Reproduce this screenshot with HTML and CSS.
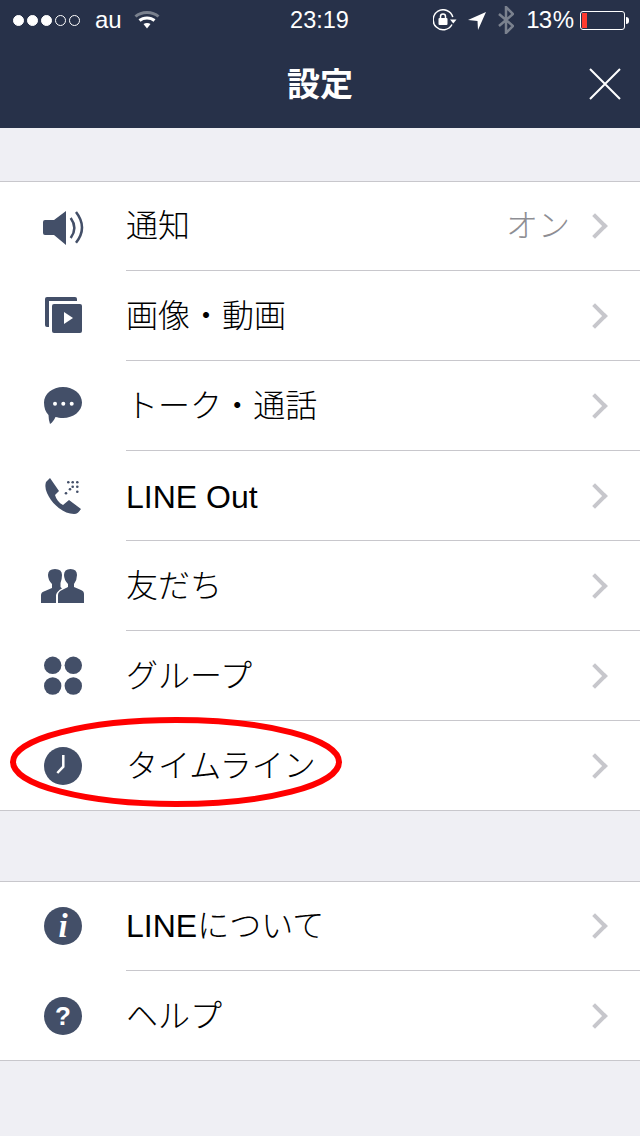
FILE: index.html
```html
<!DOCTYPE html>
<html lang="ja">
<head>
    <meta charset="UTF-8">
    <meta name="viewport" content="width=device-width, initial-scale=1.0">
    <title>設定</title>
    <link rel="stylesheet" href="styles.css">
</head>
<body>
    <div id="header">
        <div id="status-bar">
            <div class="status-left">
                <div class="signal">
                    <span class="dot on"></span><span class="dot on"></span><span class="dot on"></span><span class="dot"></span><span class="dot"></span>
                </div>
                <span class="carrier">au</span>
                <svg class="wifi" width="26" height="20" viewBox="0 0 26 20">
                    <path d="M1.500 6.500C7.500 1 18.500 1 24.500 6.500" fill="none" stroke="#7a818e" stroke-width="3"/>
                    <path d="M5.500 10.500C9.500 7 16.500 7 20.500 10.500" fill="none" stroke="#fff" stroke-width="3"/>
                    <path d="M9.500 14C11.500 12.500 14.500 12.500 16.500 14L13 18.500Z" fill="#fff"/>
                </svg>
            </div>
            <div class="status-time">23:19</div>
            <div class="status-right">
                <svg width="24" height="22" viewBox="0 0 24 22">
                    <path d="M19 15.500A10 10 0 1 1 19.800 8" fill="none" stroke="#fff" stroke-width="1.500"/>
                    <path d="M17 10.500h6.500l-3.250 4z" fill="#fff"/>
                    <rect x="5.500" y="9" width="9" height="7" rx="1" fill="#fff"/>
                    <path d="M7.500 9V7.500a2.500 2.500 0 0 1 5 0V9" fill="none" stroke="#fff" stroke-width="1.500"/>
                </svg>
                <svg class="arrow" width="20" height="20" viewBox="0 0 20 20">
                    <path d="M0 10L18 2L10 20L9.500 11Z" fill="#fff"/>
                </svg>
                <svg class="bt" width="16" height="28" viewBox="0 0 16 28">
                    <path d="M1 8L15 20L8 27V1L15 8L1 20" fill="none" stroke="#7a818e" stroke-width="2.500"/>
                </svg>
                <span class="battery-text">13 %</span>
                <div class="battery"><div class="battery-level"></div></div>
                <div class="battery-tip"></div>
            </div>
        </div>
        <div id="nav-bar">
            <div id="nav-title">設定</div>
            <svg id="nav-close" width="32" height="32" viewBox="0 0 32 32">
                <path d="M1 1L31 31M31 1L1 31" stroke="#fff" stroke-width="2" fill="none"/>
            </svg>
        </div>
    </div>

    <div class="group first-group">
        <div class="row">
            <div class="row-icon">
                <svg width="44" height="44" viewBox="0 0 44 44">
                    <path d="M4 16H13L25 7V41L13 31H4Q2 31 2 29V18Q2 16 4 16Z" fill="#434f68"/>
                    <path d="M29.700 14Q37 24 29.700 34" fill="none" stroke="#434f68" stroke-width="2.500"/>
                    <path d="M35 8Q47 23.500 35 38.700" fill="none" stroke="#434f68" stroke-width="2.500"/>
                </svg>
            </div>
            <div class="row-body">
                <span class="row-label">通知</span>
                <span class="row-value">オン</span>
                <span class="chevron"></span>
            </div>
        </div>
        <div class="row">
            <div class="row-icon">
                <svg width="44" height="44" viewBox="0 0 44 44">
                    <rect x="4" y="3" width="32" height="30" rx="2" fill="#434f68"/>
                    <rect x="8" y="7" width="33" height="32" fill="#fff"/>
                    <rect x="11" y="10" width="30" height="29" rx="2" fill="#434f68"/>
                    <path d="M23 18L32 24L23 30Z" fill="#fff"/>
                </svg>
            </div>
            <div class="row-body">
                <span class="row-label">画像・動画</span>
                <span class="chevron"></span>
            </div>
        </div>
        <div class="row">
            <div class="row-icon">
                <svg width="44" height="44" viewBox="0 0 44 44">
                    <path d="M22 3C32.500 3 41 10 41 18.500C41 27.500 32 34 22 34C19 34 16.500 33.500 14.500 33C13 36 11.500 38.500 9 40C8 37 7.500 34 7.500 31C4.500 28 3 24 3 18.500C3 10 11.500 3 22 3Z" fill="#434f68"/>
                    <circle cx="14" cy="19.700" r="2" fill="#fff"/>
                    <circle cx="22.300" cy="19.700" r="2" fill="#fff"/>
                    <circle cx="30.700" cy="19.700" r="2" fill="#fff"/>
                </svg>
            </div>
            <div class="row-body">
                <span class="row-label">トーク・通話</span>
                <span class="chevron"></span>
            </div>
        </div>
        <div class="row">
            <div class="row-icon">
                <svg width="44" height="44" viewBox="0 0 44 44">
                    <path d="M9 4L18 17L14 21C15 25 18 29 22 31L28 26L40 35C38 38 36 40 33 40C25 40 16 34 10 26C6 20 3 14 5 8Z" fill="#434f68"/>
                    <g fill="#434f68">
                        <circle cx="27.300" cy="8.300" r="1.300"/><circle cx="31.700" cy="8.300" r="1.300"/><circle cx="36.300" cy="8.300" r="1.300"/>
                        <circle cx="31.700" cy="12.700" r="1.300"/><circle cx="36.300" cy="12.700" r="1.300"/>
                        <circle cx="29" cy="15.300" r="1.300"/><circle cx="36.300" cy="17.700" r="1.300"/>
                        <circle cx="25" cy="19.300" r="1.300"/>
                    </g>
                </svg>
            </div>
            <div class="row-body">
                <span class="row-label line-out"><span class="latin">LINE Out</span></span>
                <span class="chevron"></span>
            </div>
        </div>
        <div class="row">
            <div class="row-icon">
                <svg width="44" height="44" viewBox="0 0 44 44">
                    <path d="M0 39V31Q0 28 4 27L11 24V20Q7 16 7 11Q7 5 14 5Q21 5 21 11Q21 15 19.500 19V23L21 24.500Q16 27 15 31V39Z" fill="#434f68"/>
                    <path d="M17 39V31Q17 28 21 26L27 23V20Q23 16 23 11Q23 5 29.500 5Q36 5 36 11Q36 16 33 20V23L40 26Q43 27 43 30V39Z" fill="#434f68"/>
                </svg>
            </div>
            <div class="row-body">
                <span class="row-label">友だち</span>
                <span class="chevron"></span>
            </div>
        </div>
        <div class="row">
            <div class="row-icon">
                <svg width="44" height="44" viewBox="0 0 44 44">
                    <circle cx="11.700" cy="11.300" r="8.700" fill="#434f68"/>
                    <circle cx="32.300" cy="11.300" r="8.700" fill="#434f68"/>
                    <circle cx="11.700" cy="32" r="8.700" fill="#434f68"/>
                    <circle cx="32.300" cy="32" r="8.700" fill="#434f68"/>
                </svg>
            </div>
            <div class="row-body">
                <span class="row-label">グループ</span>
                <span class="chevron"></span>
            </div>
        </div>
        <div class="row">
            <div class="row-icon">
                <svg width="44" height="44" viewBox="0 0 44 44">
                    <circle cx="22" cy="22" r="19" fill="#434f68"/>
                    <path d="M22.300 11V22.700L16.300 29" fill="none" stroke="#fff" stroke-width="2.500"/>
                </svg>
            </div>
            <div class="row-body">
                <span class="row-label">タイムライン</span>
                <span class="chevron"></span>
            </div>
            <svg class="annotation" width="340" height="94" viewBox="0 0 340 94">
                <ellipse cx="170" cy="48" rx="163" ry="42" fill="none" stroke="#f00" stroke-width="6"/>
            </svg>
        </div>
    </div>

    <div class="group second-group">
        <div class="row">
            <div class="row-icon">
                <div class="badge badge-info">i</div>
            </div>
            <div class="row-body">
                <span class="row-label"><span class="latin">LINE</span>について</span>
                <span class="chevron"></span>
            </div>
        </div>
        <div class="row">
            <div class="row-icon">
                <div class="badge">?</div>
            </div>
            <div class="row-body">
                <span class="row-label">ヘルプ</span>
                <span class="chevron"></span>
            </div>
        </div>
    </div>
</body>
</html>
```

FILE: styles.css
```css
html, body {
    margin: 0;
    padding: 0;
    height: 100%;
    overflow: hidden;
    background-color: #efeff4;
    font-family: "Liberation Sans", "Noto Sans CJK JP", sans-serif;
}
#header {
    height: 128px;
    background-color: #273149;
    color: #fff;
}
#status-bar {
    height: 40px;
    display: grid;
    grid-template-columns: 1fr auto 1fr;
    align-items: center;
    padding: 0 11px 0 10px;
}
.status-left {
    display: flex;
    align-items: center;
    padding-left: 3px;
}
.signal {
    display: flex;
    gap: 3px;
}
.dot {
    width: 11px;
    height: 11px;
    border: 1px solid #fff;
    border-radius: 50%;
    box-sizing: border-box;
}
.dot.on {
    background-color: #fff;
}
.carrier {
    font-size: 24px;
    margin-left: 15px;
}
.wifi {
    margin-left: 12px;
}
.status-time {
    font-size: 23.500px;
}
.status-right {
    display: flex;
    align-items: center;
    justify-content: flex-end;
    font-size: 24px;
}
.arrow {
    margin-left: 11px;
}
.bt {
    margin-left: 10px;
}
.battery-text {
    margin-left: 12px;
    white-space: pre;
    letter-spacing: -1px;
    word-spacing: -4px;
}
.battery {
    width: 45px;
    height: 19px;
    margin-left: 7px;
    border: 1px solid #fff;
    border-radius: 3px;
    box-sizing: border-box;
    padding: 1px;
}
.battery-level {
    width: 5px;
    height: 100%;
    background-color: #ff3b30;
}
.battery-tip {
    width: 3px;
    height: 7px;
    margin-left: 1px;
    background-color: #fff;
    border-radius: 0 3px 3px 0;
}
#nav-bar {
    height: 88px;
    display: flex;
    align-items: center;
    justify-content: center;
    position: relative;
}
#nav-title {
    font-family: "Noto Sans CJK JP", sans-serif;
    font-size: 33px;
    font-weight: 700;
    margin-bottom: 4px;
}
#nav-close {
    position: absolute;
    right: 19px;
    top: 28px;
}
.group {
    background-color: #fff;
    border-top: 1px solid #c8c7cc;
    border-bottom: 1px solid #c8c7cc;
}
.first-group {
    margin-top: 53px;
}
.second-group {
    margin-top: 70px;
}
.row {
    height: 90px;
    display: flex;
    position: relative;
}
.row:first-child, .row:last-child {
    height: 89px;
}
.row-icon {
    width: 126px;
    padding: 23px 0 0 41px;
    box-sizing: border-box;
}
.row:first-child .row-icon {
    padding-top: 22px;
}
.row-icon svg {
    display: block;
}
.row-body {
    flex-grow: 1;
    display: flex;
    align-items: center;
    padding-right: 36px;
    border-bottom: 1px solid #c8c7cc;
}
.row:last-child .row-body {
    border-bottom: none;
}
.row-label {
    flex-grow: 1;
    font-family: "Noto Sans CJK JP", sans-serif;
    font-size: 32px;
    font-weight: 300;
    color: #000;
    margin-bottom: 6px;
}
.row-label .latin {
    font-family: "Liberation Sans", sans-serif;
    font-weight: 400;
}
.row-label.line-out {
    margin-bottom: 4px;
}
.row-value {
    font-family: "Noto Sans CJK JP", sans-serif;
    font-size: 32px;
    font-weight: 300;
    color: #8e8e93;
    margin: 0 16px 6px 0;
}
.chevron {
    width: 18px;
    height: 18px;
    border-top: 4px solid #c7c7cc;
    border-right: 4px solid #c7c7cc;
    box-sizing: border-box;
    transform: rotate(45deg);
}
.badge {
    width: 38px;
    height: 38px;
    margin: 3px;
    border-radius: 50%;
    background-color: #434f68;
    color: #fff;
    display: flex;
    align-items: center;
    justify-content: center;
    font-size: 26px;
    font-weight: 700;
}
.badge-info {
    font-family: "Liberation Serif", serif;
    font-style: italic;
    font-size: 33px;
}
.annotation {
    position: absolute;
    left: 6px;
    top: -7px;
}
```
